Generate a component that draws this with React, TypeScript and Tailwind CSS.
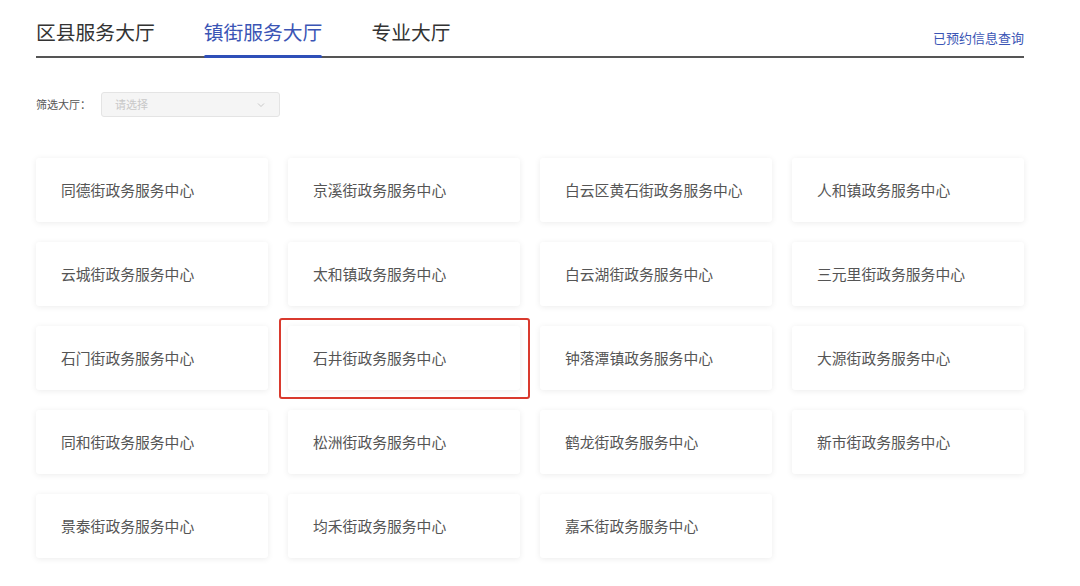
const halls = [
  "同德街政务服务中心",
  "京溪街政务服务中心",
  "白云区黄石街政务服务中心",
  "人和镇政务服务中心",
  "云城街政务服务中心",
  "太和镇政务服务中心",
  "白云湖街政务服务中心",
  "三元里街政务服务中心",
  "石门街政务服务中心",
  "石井街政务服务中心",
  "钟落潭镇政务服务中心",
  "大源街政务服务中心",
  "同和街政务服务中心",
  "松洲街政务服务中心",
  "鹤龙街政务服务中心",
  "新市街政务服务中心",
  "景泰街政务服务中心",
  "均禾街政务服务中心",
  "嘉禾街政务服务中心",
];

const tabs = ["区县服务大厅", "镇街服务大厅", "专业大厅"];

const App = () => {
  const active = 1;
  const highlighted = "石井街政务服务中心";

  return (
    <div
      className="w-[1080px] h-[586px] bg-white overflow-hidden"
      style={{ fontFamily: '"Noto Sans CJK SC", "Noto Sans", sans-serif' }}
    >
      <div className="ml-[36px] w-[988px]">
        {/* Tabs */}
        <div className="flex items-end justify-between border-b-2 border-[#555] h-[58px]">
          <div className="flex gap-[49px]">
            {tabs.map((t, i) => (
              <div
                key={t}
                className={
                  i === active
                    ? "text-[19.8px] leading-[28px] pb-[10px] text-[#3b55b5] relative"
                    : "text-[19.8px] leading-[28px] pb-[10px] text-[#333]"
                }
              >
                {t}
                {i === active && (
                  <span className="absolute left-0 right-0 -bottom-[2px] h-[3px] bg-[#2f4fb8] rounded-sm" />
                )}
              </div>
            ))}
          </div>
          <a className="text-[13px] leading-[18px] pb-[9px] text-[#3b55b5] cursor-pointer">
            已预约信息查询
          </a>
        </div>

        {/* Filter */}
        <div className="flex items-center mt-[34px] h-[25px]">
          <span className="text-[11px] text-[#555] w-[65px]">筛选大厅：</span>
          <div className="w-[179px] h-[25px] bg-[#f5f5f5] border border-[#e4e4e4] rounded-[3px] flex items-center justify-between px-[13px]">
            <span className="text-[11px] text-[#c8c8c8]">请选择</span>
            <svg width="10" height="10" viewBox="0 0 10 10" fill="none">
              <path d="M2 3.5 L5 6.5 L8 3.5" stroke="#c8c8c8" strokeWidth="1" />
            </svg>
          </div>
        </div>

        {/* Cards */}
        <div className="grid grid-cols-4 gap-x-[20px] gap-y-[20px] mt-[41px]">
          {halls.map((h) => (
            <div key={h} className="relative">
              <div className="h-[64px] bg-white rounded-[3px] shadow-[0_1px_6px_rgba(0,0,0,0.08)] flex items-center pl-[25px] text-[14.8px] text-[#555] cursor-pointer">
                {h}
              </div>
              {h === highlighted && (
                <div className="absolute -left-[9px] -right-[10px] -top-[8px] -bottom-[9px] border-2 border-[#d93a2e] rounded-[3px] pointer-events-none" />
              )}
            </div>
          ))}
        </div>
      </div>
    </div>
  );
};

export default App;
